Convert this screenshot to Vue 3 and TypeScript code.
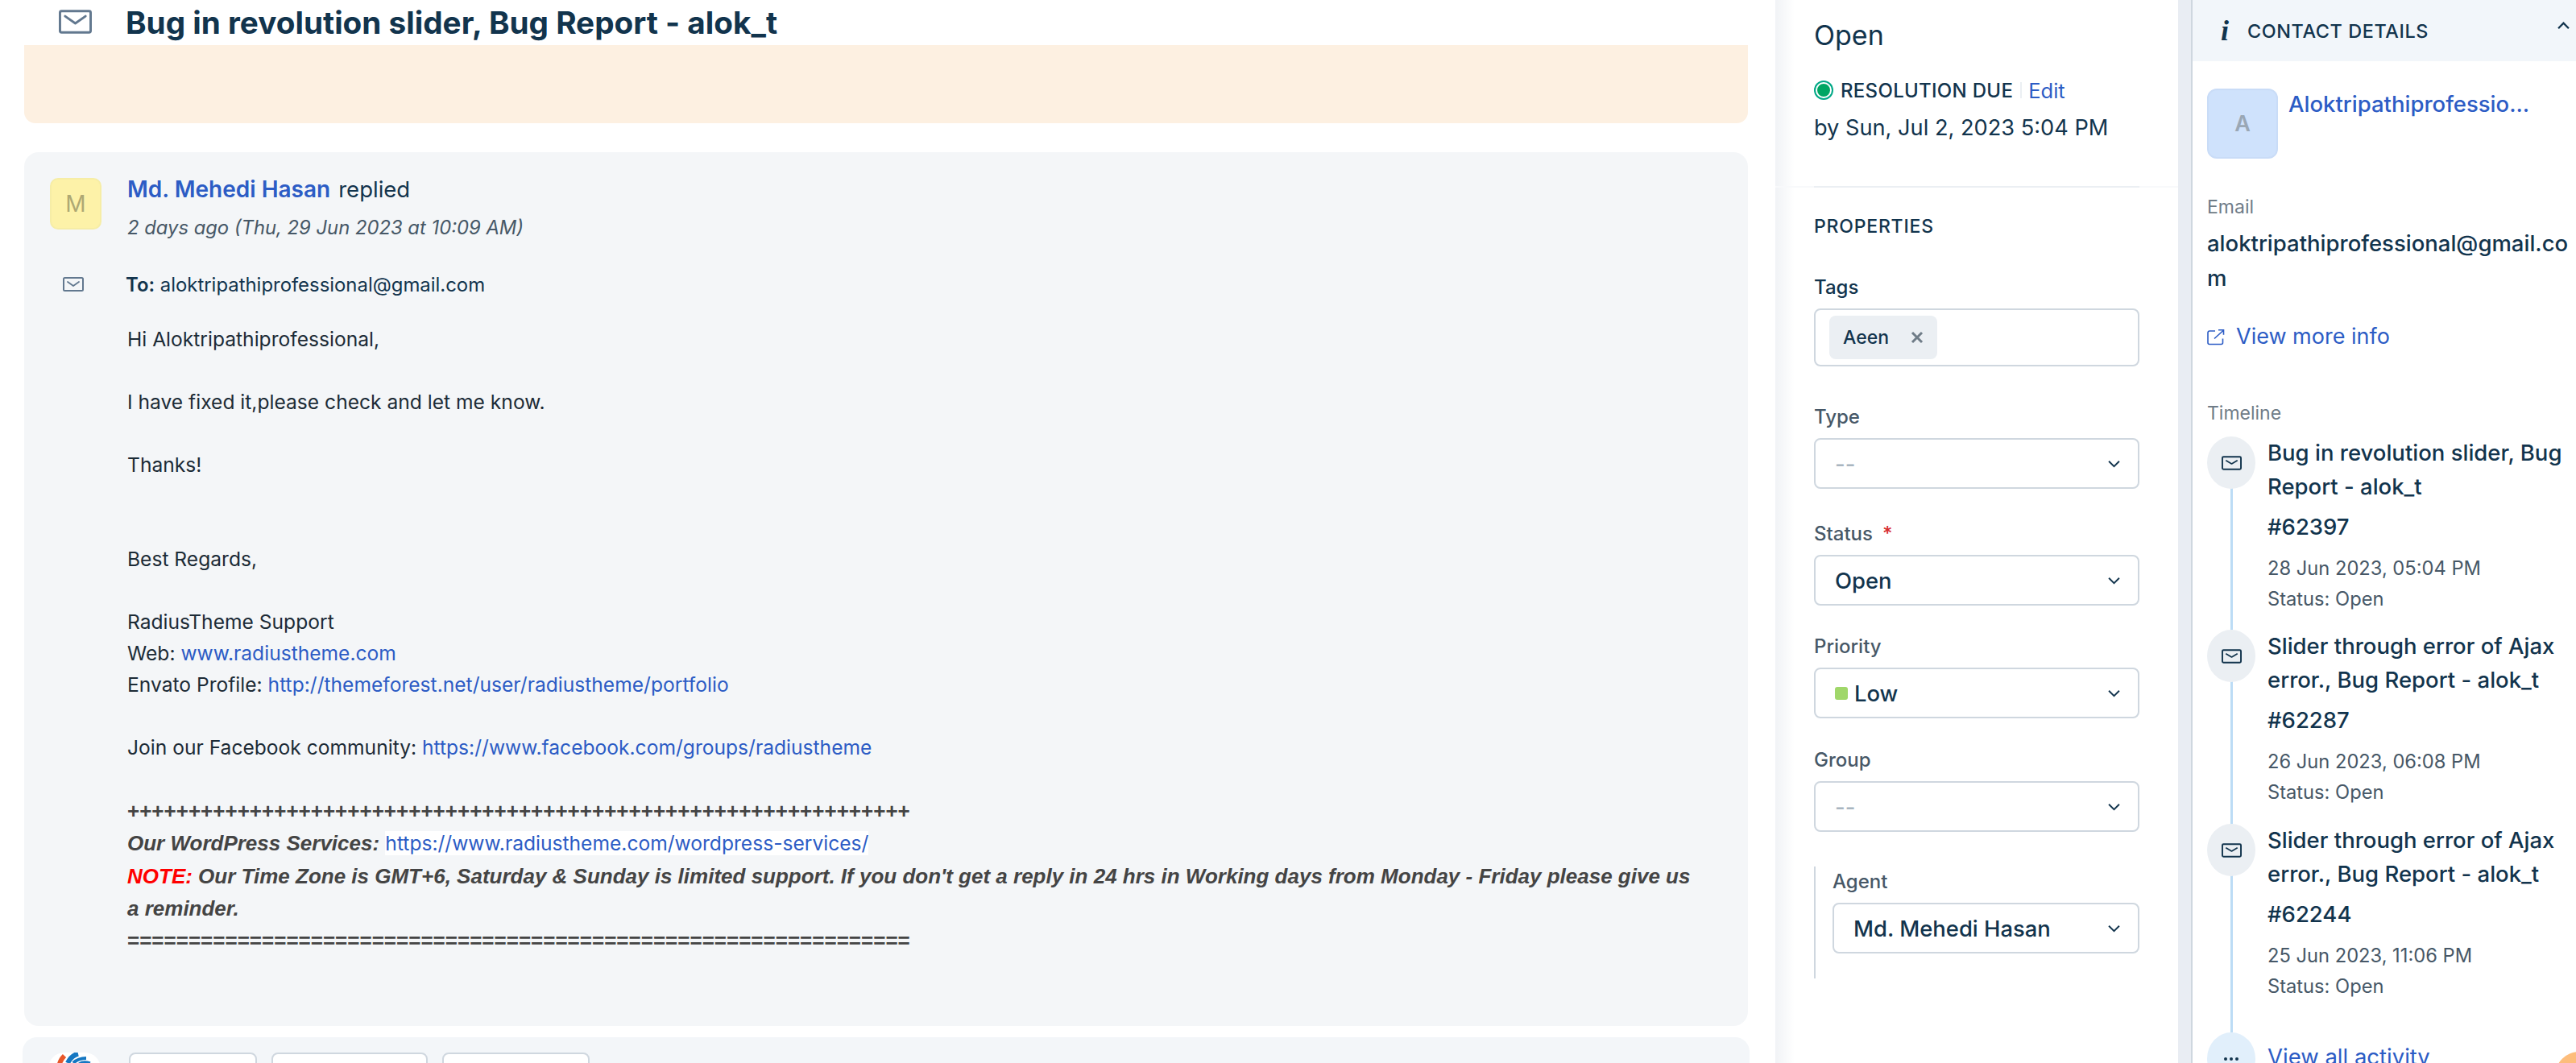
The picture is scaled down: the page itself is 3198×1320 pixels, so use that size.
<template>
  <div class="page">
    <!-- Conversation -->
    <main class="main">
      <div class="title-row">
        <svg class="title-icon" viewBox="0 0 42 30" fill="none">
          <rect x="1.5" y="1.5" width="39" height="27" rx="2" stroke="#62788f" stroke-width="3" />
          <path d="M8 8l13 9 13-9" stroke="#62788f" stroke-width="3" stroke-linecap="round" stroke-linejoin="round" />
        </svg>
        <h1>Bug in revolution slider, Bug Report - alok_t</h1>
      </div>
      <div class="band"></div>

      <section class="card">
        <div class="head">
          <div class="avatar">M</div>
          <div class="head-text">
            <div class="who"><a>Md. Mehedi Hasan</a><span>replied</span></div>
            <div class="when">2 days ago (Thu, 29 Jun 2023 at 10:09 AM)</div>
          </div>
        </div>
        <div class="to-row">
          <svg class="to-icon" viewBox="0 0 26 18" fill="none">
            <rect x="1" y="1" width="24" height="16" rx="1.5" stroke="#62788f" stroke-width="2" />
            <path d="M6 6l7 5 7-5" stroke="#62788f" stroke-width="1.8" stroke-linecap="round" stroke-linejoin="round" />
          </svg>
          <div class="to"><b>To:</b> aloktripathiprofessional@gmail.com</div>
        </div>
        <div class="body">
          Hi Aloktripathiprofessional,<br /><br />
          I have fixed it,please check and let me know.<br /><br />
          Thanks!<br /><br /><br />
          Best Regards,<br /><br />
          RadiusTheme Support<br />
          Web: <a>www.radiustheme.com</a><br />
          Envato Profile: <a>http://themeforest.net/user/radiustheme/portfolio</a><br /><br />
          Join our Facebook community: <a>https://www.facebook.com/groups/radiustheme</a><br /><br />
          <div class="signature">
            <div>{{ plusLine }}</div>
            <div><i>Our WordPress Services:</i> <a class="highlight">https://www.radiustheme.com/wordpress-services/</a></div>
            <div><i><span class="note">NOTE:</span> Our Time Zone is GMT+6, Saturday &amp; Sunday is limited support. If you don't get a reply in 24 hrs in Working days from Monday - Friday please give us a reminder.</i></div>
            <div>{{ equalLine }}</div>
          </div>
        </div>
      </section>

      <section class="reply-bar">
        <svg class="logo" viewBox="0 0 65 40">
          <rect width="65" height="60" rx="20" fill="#fff" />
          <path d="M20 4C17 7 15 10 14 14" stroke="#e8572a" stroke-width="6" fill="none" />
          <path d="M24 13C27 7 31 3 37 1.5" stroke="#1577c2" stroke-width="6" fill="none" />
          <path d="M31 13C35 9 40 7 47 7" stroke="#1577c2" stroke-width="4" fill="none" />
          <path d="M38 14C41 12 46 11 52 13" stroke="#1577c2" stroke-width="3" fill="none" />
        </svg>
        <button class="reply-btn first"></button>
        <button class="reply-btn second"></button>
        <button class="reply-btn third"></button>
      </section>
    </main>

    <!-- Properties -->
    <aside class="props">
      <div class="status-title">Open</div>
      <div class="due">
        <span class="dot"></span>
        <b>RESOLUTION DUE</b>
        <span class="sep"></span>
        <a>Edit</a>
      </div>
      <div class="due-date">by Sun, Jul 2, 2023 5:04 PM</div>
      <hr />
      <h3>PROPERTIES</h3>

      <label class="dark">Tags</label>
      <div class="tags">
        <span class="chip">Aeen
          <svg viewBox="0 0 16 16" fill="none"><path d="M2 2l12 12M14 2L2 14" stroke="#6f7c87" stroke-width="3" /></svg>
        </span>
      </div>

      <div v-for="f in fields" :key="f.label" class="field" :style="{ marginTop: f.top + 'px' }">
        <label>{{ f.label }}<span v-if="f.required" class="req">*</span></label>
        <div class="select">
          <span v-if="f.swatch" class="swatch"></span>
          <span :class="{ empty: f.value === '--' }">{{ f.value }}</span>
          <svg class="chev" viewBox="0 0 14 9" fill="none"><path d="M1 1.5l6 6 6-6" stroke="#12344d" stroke-width="1.8" /></svg>
        </div>
      </div>

      <div class="agent">
        <label>Agent</label>
        <div class="select">
          <span>Md. Mehedi Hasan</span>
          <svg class="chev" viewBox="0 0 14 9" fill="none"><path d="M1 1.5l6 6 6-6" stroke="#12344d" stroke-width="1.8" /></svg>
        </div>
      </div>
    </aside>

    <!-- Contact -->
    <aside class="contact">
      <div class="contact-head">
        <span class="info">i</span>
        <span class="contact-title">CONTACT DETAILS</span>
        <svg class="up" viewBox="0 0 14 9" fill="none"><path d="M1 7.5l6-6 6 6" stroke="#12344d" stroke-width="2.2" /></svg>
      </div>
      <div class="contact-body">
        <div class="person">
          <div class="person-avatar">A</div>
          <a class="person-name">Aloktripathiprofessio...</a>
        </div>
        <div class="muted email-label">Email</div>
        <div class="email">aloktripathiprofessional@gmail.com</div>
        <a class="more">
          <svg viewBox="0 0 22 20" fill="none">
            <path d="M10 2.5H3a2 2 0 0 0-2 2V17a2 2 0 0 0 2 2h14.5a2 2 0 0 0 2-2v-5" stroke="#2c5cc5" stroke-width="1.6" />
            <path d="M9 12L20 2M14 1.2h6.5v6" stroke="#2c5cc5" stroke-width="1.6" />
          </svg>
          View more info
        </a>
        <div class="muted timeline-label">Timeline</div>
        <div class="timeline">
          <div v-for="t in timeline" :key="t.id" class="event">
            <div class="event-icon">
              <svg viewBox="0 0 26 18" fill="none">
                <rect x="1" y="1" width="24" height="16" rx="1.5" stroke="#12344d" stroke-width="2" />
                <path d="M6 6l7 4 7-4" stroke="#12344d" stroke-width="1.8" stroke-linecap="round" stroke-linejoin="round" />
              </svg>
            </div>
            <div class="event-text">
              <div class="event-title">{{ t.title }}</div>
              <div class="event-id">{{ t.id }}</div>
              <div class="event-date">{{ t.date }}</div>
              <div class="event-status">Status: Open</div>
            </div>
          </div>
          <div class="event last">
            <div class="event-icon more-icon">
              <span></span><span></span><span></span>
            </div>
            <a class="view-all">View all activity</a>
          </div>
        </div>
      </div>
    </aside>

    <div class="bubble"></div>
  </div>
</template>

<script setup lang="ts">
interface Field {
  label: string
  value: string
  top: number
  required?: boolean
  swatch?: boolean
}

const plusLine = '+'.repeat(64)
const equalLine = '='.repeat(64)

const fields: Field[] = [
  { label: 'Type', value: '--', top: 48 },
  { label: 'Status', value: 'Open', required: true, top: 41 },
  { label: 'Priority', value: 'Low', swatch: true, top: 36 },
  { label: 'Group', value: '--', top: 37 },
]

const timeline = [
  { id: '#62397', title: 'Bug in revolution slider, Bug Report - alok_t', date: '28 Jun 2023, 05:04 PM' },
  { id: '#62287', title: 'Slider through error of Ajax error., Bug Report - alok_t', date: '26 Jun 2023, 06:08 PM' },
  { id: '#62244', title: 'Slider through error of Ajax error., Bug Report - alok_t', date: '25 Jun 2023, 11:06 PM' },
]
</script>

<style>
html, body {
  margin: 0;
  background: #fff;
}
</style>

<style scoped>
.page {
  position: relative;
  display: flex;
  width: 3198px;
  height: 1320px;
  overflow: hidden;
  background: #fff;
  color: #12344d;
  font-family: Inter, "Liberation Sans", sans-serif;
}

a {
  color: #2c5cc5;
}

/* main column */
.main {
  width: 2204px;
  flex: none;
  padding: 0 34px 0 30px;
  box-sizing: border-box;
}

.title-row {
  display: flex;
  align-items: center;
  height: 56px;
  padding-left: 43px;
  gap: 42px;
}

.title-icon {
  width: 41px;
  height: 30px;
  margin-top: -2px;
}

.title-row h1 {
  margin: 0;
  font-size: 38.7px;
  font-weight: 700;
  line-height: 52px;
  white-space: nowrap;
}

.band {
  height: 97px;
  background: #fdf0e1;
  border-radius: 0 0 14px 14px;
}

.card {
  height: 1085px;
  margin-top: 36px;
  padding: 32px 60px 0 32px;
  box-sizing: border-box;
  background: #f4f6f8;
  border-radius: 18px;
}

.head {
  display: flex;
  gap: 32px;
}

.avatar {
  display: flex;
  align-items: center;
  justify-content: center;
  width: 64px;
  height: 64px;
  box-sizing: border-box;
  background: #fdf2a8;
  border: 2px solid #f6eda6;
  border-radius: 10px;
  color: #aea873;
  font-size: 28px;
}

.who {
  display: flex;
  gap: 10px;
  font-size: 28px;
  line-height: 28px;
}

.who a {
  font-weight: 600;
}

.who span {
  font-size: 27.5px;
}

.when {
  margin-top: 20px;
  font-size: 23.8px;
  line-height: 28px;
  font-style: italic;
  color: #475867;
}

.to-row {
  display: flex;
  align-items: center;
  gap: 52px;
  height: 36px;
  margin-top: 38px;
  padding-left: 16px;
}

.to-icon {
  width: 26px;
  height: 18px;
}

.to {
  font-size: 23.9px;
  color: #12344d;
  white-space: nowrap;
}

.to b {
  font-weight: 600;
}

.body {
  margin: 31px 0 0 96px;
  font-size: 24.6px;
  line-height: 39px;
  color: #1c2b36;
}

.signature {
  font-family: "Liberation Sans", Arial, sans-serif;
  font-size: 26px;
  font-weight: 700;
  color: #444;
  line-height: 40.3px;
}

.signature a {
  font-family: Inter, sans-serif;
  font-size: 24.6px;
  font-weight: 400;
}

.highlight {
  background: #fff;
}

.note {
  color: #f00;
}

.reply-bar {
  display: flex;
  height: 100px;
  margin: 14px -2px 0;
  padding: 19px 0 0 32px;
  box-sizing: border-box;
  background: #f3f6f9;
  border-radius: 18px;
}

.logo {
  width: 65px;
  height: 40px;
  margin-right: 35px;
}

.reply-btn {
  height: 60px;
  margin-right: 18px;
  padding: 0;
  background: #fff;
  border: 2px solid #cfd7df;
  border-radius: 8px;
}

.first { width: 159px; }
.second { width: 194px; }
.third { width: 183px; }

/* properties */
.props {
  width: 500px;
  flex: none;
  padding: 0 48px;
  box-sizing: border-box;
  background: linear-gradient(90deg, #f1f3f6, #fff 24px);
}

.status-title {
  margin-top: 22px;
  font-size: 34px;
  line-height: 44px;
}

.due {
  display: flex;
  align-items: center;
  height: 32px;
  margin-top: 30px;
  font-size: 24px;
}

.dot {
  width: 20px;
  height: 20px;
  box-sizing: border-box;
  margin: 0 11px 0 2px;
  background: #00a663;
  border: 2px solid #fff;
  border-radius: 50%;
  box-shadow: 0 0 0 2px #00a886;
}

.due b {
  font-weight: 500;
  letter-spacing: 0.3px;
}

.sep {
  width: 2px;
  height: 20px;
  margin: 0 8px 0 9px;
  background: #ebeff3;
}

.due a {
  font-size: 25.5px;
}

.due-date {
  margin-top: 15px;
  font-size: 27.2px;
  line-height: 32px;
  white-space: nowrap;
}

hr {
  height: 2px;
  margin: 56px -48px 0;
  background: linear-gradient(90deg, #f8f9fb 48px, #ebeff3 48px, #ebeff3 452px, #f8f9fb 452px);
  border: 0;
}

h3 {
  margin: 34px 0 0;
  font-size: 23px;
  font-weight: 500;
  line-height: 28px;
  letter-spacing: 0.8px;
}

label {
  display: block;
  font-size: 24px;
  line-height: 30px;
  font-weight: 500;
  color: #475867;
}

label.dark {
  margin-top: 47px;
  color: #12344d;
}

.req {
  margin-left: 12px;
  color: #d72d30;
}

.tags {
  display: flex;
  align-items: center;
  height: 72px;
  margin-top: 11px;
  padding-left: 17px;
  box-sizing: border-box;
  background: #fff;
  border: 2px solid #cfd7df;
  border-radius: 8px;
}

.chip {
  display: flex;
  align-items: center;
  justify-content: space-between;
  width: 134px;
  height: 54px;
  padding: 0 17px;
  box-sizing: border-box;
  background: #ebeff3;
  border-radius: 8px;
  font-size: 23px;
  font-weight: 500;
}

.chip svg {
  width: 16px;
  height: 16px;
}

.select {
  display: flex;
  align-items: center;
  height: 63px;
  margin-top: 11px;
  padding: 0 22px 0 24px;
  box-sizing: border-box;
  background: #fff;
  border: 2px solid #cfd7df;
  border-radius: 8px;
  font-size: 27.4px;
  font-weight: 500;
  white-space: nowrap;
}

.select .chev {
  width: 15px;
  height: 10px;
  margin-left: auto;
}

.empty {
  color: #a9b5bf;
}

.swatch {
  width: 16px;
  height: 16px;
  margin-right: 8px;
  background: #a0d76a;
  border-radius: 3px;
}

.agent {
  height: 139px;
  margin-top: 43px;
  padding: 4px 0 0 21px;
  box-sizing: border-box;
  border-left: 2px solid #cfd7df;
}

/* contact */
.contact {
  width: 494px;
  flex: none;
  border-left: 16px solid #e9edf3;
  box-sizing: border-box;
  box-shadow: inset 2px 0 0 #cfd7df;
}

.contact-head {
  display: flex;
  align-items: center;
  height: 76px;
  padding-left: 37px;
  background: #f2f6fa;
  margin-left: 2px;
}

.info {
  width: 33px;
  font-family: "Liberation Serif", serif;
  font-size: 36px;
  font-style: italic;
  font-weight: 700;
  margin-left: -2px;
}

.contact-title {
  font-size: 23.4px;
  font-weight: 500;
  letter-spacing: 0.6px;
}

.up {
  width: 15px;
  height: 10px;
  margin-left: auto;
  margin-right: 8px;
  margin-top: -12px;
}

.contact-body {
  padding: 34px 8px 0 20px;
}

.person {
  display: flex;
  gap: 13px;
}

.person-avatar {
  display: flex;
  align-items: center;
  justify-content: center;
  flex: none;
  width: 88px;
  height: 87px;
  box-sizing: border-box;
  background: #cfe2fc;
  border: 2px solid #c9dcf7;
  border-radius: 12px;
  color: #9aa7b5;
  font-size: 27px;
  font-weight: 600;
}

.person-name {
  margin-top: 1px;
  font-size: 27.5px;
  font-weight: 500;
  line-height: 36px;
  white-space: nowrap;
}

.muted {
  font-size: 23px;
  line-height: 30px;
  color: #6f7c87;
}

.email-label {
  margin-top: 45px;
}

.email {
  margin-top: 9px;
  font-size: 27.5px;
  font-weight: 500;
  line-height: 43px;
  word-break: break-all;
}

.more {
  display: flex;
  align-items: center;
  gap: 14px;
  margin-top: 33px;
  font-size: 27px;
  line-height: 36px;
}

.more svg {
  width: 22px;
  height: 21px;
}

.timeline-label {
  margin-top: 62px;
}

.timeline {
  position: relative;
  margin-top: 14px;
}

.event {
  position: relative;
  display: flex;
  gap: 15px;
  height: 240px;
}

.event:nth-child(2) {
  height: 241px;
}

.event:nth-child(3) {
  height: 259px;
}

.event::before {
  content: "";
  position: absolute;
  left: 29px;
  top: 60px;
  bottom: 0;
  width: 3px;
  background: #bcdcf5;
}

.event.last::before {
  display: none;
}

.event-icon {
  position: relative;
  display: flex;
  align-items: center;
  justify-content: center;
  flex: none;
  width: 60px;
  height: 65px;
  background: #ebeff3;
  border-radius: 50%;
}

.event-icon svg {
  width: 25px;
  height: 18px;
}

.event-text {
  font-size: 27.5px;
}

.event-title {
  margin-top: -1px;
  font-weight: 500;
  line-height: 42px;
}

.event-id {
  margin-top: 8px;
  line-height: 42px;
  font-weight: 500;
}

.event-date {
  margin-top: 12px;
  font-size: 23.7px;
  line-height: 38px;
  color: #475867;
}

.event-status {
  font-size: 23.7px;
  line-height: 38px;
  color: #475867;
}

.more-icon {
  gap: 3px;
  background: #e1effb;
}

.more-icon span {
  width: 4px;
  height: 4px;
  background: #12344d;
  border-radius: 50%;
}

.view-all {
  font-size: 27.5px;
  line-height: 42px;
  margin-top: 9px;
  white-space: nowrap;
}

.bubble {
  position: absolute;
  left: 3172px;
  top: 1306px;
  width: 60px;
  height: 60px;
  background: #fdbd7c;
  border-radius: 50%;
}
</style>
